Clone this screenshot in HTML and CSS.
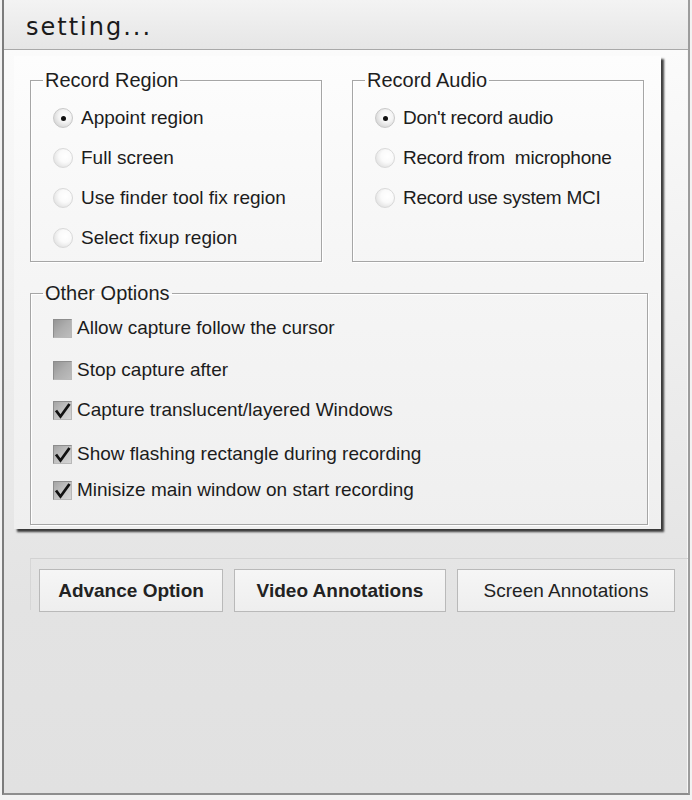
FILE: index.html
```html
<!DOCTYPE html>
<html>
<head>
<meta charset="utf-8">
<link rel="stylesheet" href="styles.css">
</head>
<body>
<div class="window">
  <div class="titlebar"><span class="title">setting...</span></div>
  <div class="content">
    <div class="panel">
      <div class="top-row">
        <fieldset class="group group-half">
          <legend>Record Region</legend>
          <div class="list">
            <div class="item"><span class="radio checked"></span><span class="label">Appoint region</span></div>
            <div class="item"><span class="radio"></span><span class="label">Full screen</span></div>
            <div class="item"><span class="radio"></span><span class="label">Use finder tool fix region</span></div>
            <div class="item"><span class="radio"></span><span class="label">Select fixup region</span></div>
          </div>
        </fieldset>
        <fieldset class="group group-half">
          <legend>Record Audio</legend>
          <div class="list">
            <div class="item"><span class="radio checked"></span><span class="label narrow">Don't record audio</span></div>
            <div class="item"><span class="radio"></span><span class="label narrow">Record from&nbsp; microphone</span></div>
            <div class="item"><span class="radio"></span><span class="label narrow">Record use system MCI</span></div>
          </div>
        </fieldset>
      </div>
      <fieldset class="group group-full">
        <legend>Other Options</legend>
        <div class="checks">
          <div class="check-item"><span class="box"></span><span class="label">Allow capture follow the cursor</span></div>
          <div class="check-item"><span class="box"></span><span class="label">Stop capture after</span></div>
          <div class="check-item"><span class="box on"><svg viewBox="0 0 19 19" width="19" height="19"><polyline points="3,9.5 7.5,15.5 16.5,3" fill="none" stroke="#111" stroke-width="2.8" stroke-linejoin="miter"/></svg></span><span class="label">Capture translucent/layered Windows</span></div>
          <div class="check-item"><span class="box on"><svg viewBox="0 0 19 19" width="19" height="19"><polyline points="3,9.5 7.5,15.5 16.5,3" fill="none" stroke="#111" stroke-width="2.8" stroke-linejoin="miter"/></svg></span><span class="label">Show flashing rectangle during recording</span></div>
          <div class="check-item"><span class="box on"><svg viewBox="0 0 19 19" width="19" height="19"><polyline points="3,9.5 7.5,15.5 16.5,3" fill="none" stroke="#111" stroke-width="2.8" stroke-linejoin="miter"/></svg></span><span class="label">Minisize main window on start recording</span></div>
        </div>
      </fieldset>
    </div>
    <div class="button-bar">
      <button class="btn btn-bold btn-advance">Advance Option</button>
      <button class="btn btn-bold btn-video">Video Annotations</button>
      <button class="btn btn-screen">Screen Annotations</button>
    </div>
  </div>
</div>
</body>
</html>
```
FILE: styles.css
```css
html, body {
  margin: 0;
  padding: 0;
  background: #f2f2f2;
}
body {
  font-family: "Liberation Sans", Arial, sans-serif;
  color: #1c1c1c;
}
.window {
  box-sizing: border-box;
  margin-left: 2px;
  width: 688px;
  height: 795px;
  border-left: 2px solid #7c7c7c;
  border-right: 2px solid #9c9c9c;
  border-bottom: 2px solid #8e8e8e;
  display: flex;
  flex-direction: column;
  background: #ececec;
}
.titlebar {
  height: 49px;
  border-bottom: 1px solid #a9a9a9;
  background: linear-gradient(#f3f3f3, #ebebeb 60%, #e6e6e6);
  padding-left: 22px;
  box-sizing: content-box;
}
.title {
  display: block;
  padding-top: 13px;
  font-family: "DejaVu Sans", Verdana, sans-serif;
  font-size: 24px;
  line-height: 28px;
  letter-spacing: 2px;
  color: #1a1a1a;
}
.content {
  flex: 1;
  background: linear-gradient(#fbfbfb, #ececec 45%, #e3e3e3 75%, #e1e1e1);
  box-shadow: inset -8px 0 0 -7px #f7f7f7;
}
.panel {
  margin-left: 10px;
  margin-top: 6px;
  width: 647px;
  height: 473px;
  box-sizing: border-box;
  padding: 14px 0 0 16px;
  background: linear-gradient(#fdfdfd, #f6f6f6 40%, #efefef);
  box-shadow: 3px 3px 2px rgba(0, 0, 0, 0.75);
}
.top-row {
  display: flex;
  gap: 30px;
}
.group {
  margin: 0;
  padding: 0;
  box-sizing: border-box;
  border: 1px solid #a6a6a6;
  box-shadow: inset 1px 1px 0 #fff, 1px 1px 0 #fff;
  min-width: 0;
}
.group legend {
  margin-left: 12px;
  padding: 0 2px;
  font-size: 20px;
  line-height: 20px;
  color: #1e1e1e;
}
.group-half {
  width: 292px;
  height: 192px;
}
.group-full {
  margin-top: 21px;
  width: 618px;
  height: 242px;
}
.list {
  padding-top: 8px;
  display: flex;
  flex-direction: column;
}
.item {
  height: 40px;
  display: flex;
  align-items: center;
  padding-left: 22px;
}
.radio {
  width: 18px;
  height: 18px;
  border-radius: 50%;
  border: 1px solid #d9d9d9;
  background: radial-gradient(circle at 62% 40%, #ffffff 0, #fafafa 40%, #e4e4e4 75%, #d2d2d2 100%);
  margin-right: 8px;
  flex: none;
  display: flex;
  align-items: center;
  justify-content: center;
}
.radio.checked {
  border-color: #c9c9c9;
  background: radial-gradient(circle at 60% 40%, #ffffff 0, #f4f4f4 40%, #d8d8d8 75%, #c4c4c4 100%);
}
.radio.checked::after {
  content: "";
  width: 5px;
  height: 5px;
  border-radius: 50%;
  background: #111;
}
.label {
  font-size: 19px;
  line-height: 22px;
  white-space: nowrap;
}
.label.narrow {
  letter-spacing: -0.25px;
}
.checks {
  display: flex;
  flex-direction: column;
  padding-top: 7px;
}
.check-item {
  height: 36px;
  display: flex;
  align-items: center;
  padding-left: 22px;
}
.check-item:nth-child(2) { margin-top: 6px; }
.check-item:nth-child(3) { margin-top: 4px; }
.check-item:nth-child(4) { margin-top: 8px; }
.check-item:nth-child(5) { margin-top: 0; }
.box {
  width: 19px;
  height: 19px;
  box-sizing: border-box;
  border: 1px solid #8d8d8d;
  border-right-color: #b8b8b8;
  border-bottom-color: #b8b8b8;
  background: linear-gradient(135deg, #959595, #aeaeae 50%, #bdbdbd);
  margin-right: 5px;
  flex: none;
  position: relative;
}
.box.on {
  background: linear-gradient(135deg, #a4a4a4, #c4c4c4 55%, #d6d6d6);
}
.box svg {
  position: absolute;
  left: -1px;
  top: -1px;
}
.button-bar {
  margin-top: 29px;
  margin-left: 26px;
  padding: 10px 0 0 8px;
  border-top: 1px solid #d2d2d2;
  border-left: 1px solid #d6d6d6;
  display: flex;
  gap: 11px;
  height: 52px;
  box-sizing: border-box;
}
.btn {
  height: 43px;
  box-sizing: border-box;
  border: 1px solid #b9b9b9;
  background: linear-gradient(#f6f6f6, #eeeeee);
  font-family: "Liberation Sans", Arial, sans-serif;
  font-size: 19px;
  color: #222;
  padding: 0;
  margin: 0;
  border-radius: 0;
}
.btn-bold { font-weight: bold; }
.btn-advance { width: 184px; }
.btn-video { width: 212px; }
.btn-screen { width: 218px; }
```
